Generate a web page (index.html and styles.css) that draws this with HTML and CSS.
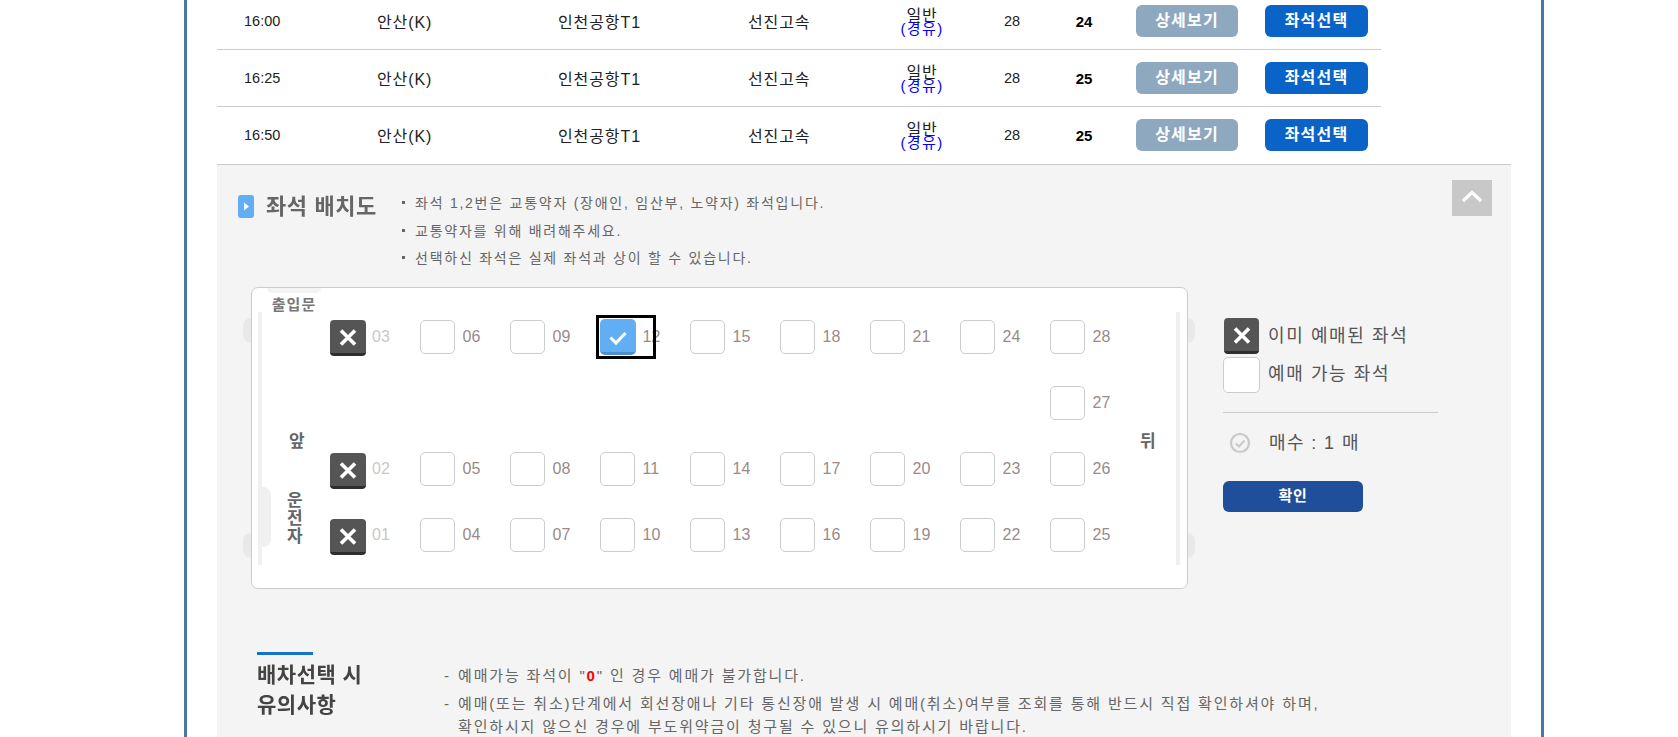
FILE: index.html
```html
<!DOCTYPE html>
<html lang="ko">
<head>
<meta charset="utf-8">
<title>좌석 배치도</title>
<link rel="stylesheet" href="styles.css">
</head>
<body>
<div class="frame">
  <div class="rows">
    <div class="row">
      <span class="time">16:00</span><span class="place">안산(K)</span><span class="place">인천공항T1</span><span class="place">선진고속</span>
      <span class="grade"><span class="g1">일반</span><span class="g2">(경유)</span></span>
      <span class="num">28</span><span class="num strong">24</span>
      <a class="btn btn-gray">상세보기</a><a class="btn btn-blue">좌석선택</a>
    </div>
    <div class="row">
      <span class="time">16:25</span><span class="place">안산(K)</span><span class="place">인천공항T1</span><span class="place">선진고속</span>
      <span class="grade"><span class="g1">일반</span><span class="g2">(경유)</span></span>
      <span class="num">28</span><span class="num strong">25</span>
      <a class="btn btn-gray">상세보기</a><a class="btn btn-blue">좌석선택</a>
    </div>
    <div class="row row-last">
      <span class="time">16:50</span><span class="place">안산(K)</span><span class="place">인천공항T1</span><span class="place">선진고속</span>
      <span class="grade"><span class="g1">일반</span><span class="g2">(경유)</span></span>
      <span class="num">28</span><span class="num strong">25</span>
      <a class="btn btn-gray">상세보기</a><a class="btn btn-blue">좌석선택</a>
    </div>
  </div>

  <section class="panel">
    <a class="up" aria-label="닫기"><svg viewBox="0 0 40 36" width="40" height="36"><path d="M11 21 L20 12.5 L29 21" fill="none" stroke="#fff" stroke-width="3.2"/></svg></a>
    <div class="head">
      <span class="title-icon"><svg viewBox="0 0 16 23" width="16" height="23"><rect width="16" height="23" rx="3" fill="#62aef5"/><path d="M6 7.5 L11 11.5 L6 15.5Z" fill="#fff"/></svg></span>
      <h2 class="title">좌석 배치도</h2>
      <ul class="info">
        <li>좌석 1,2번은 교통약자 (장애인, 임산부, 노약자) 좌석입니다.</li>
        <li>교통약자를 위해 배려해주세요.</li>
        <li>선택하신 좌석은 실제 좌석과 상이 할 수 있습니다.</li>
      </ul>
    </div>

    <div class="seat-area">
      <div class="bus">
        <span class="door">출입문</span>
        <span class="front">앞</span>
        <span class="driver">운<br>전<br>자</span>
        <span class="back">뒤</span>
        <div class="seats">
          <div class="cell off"><span class="seat taken"><svg viewBox="0 0 36 36" width="36" height="36"><path d="M11 10.5 L25 24.5 M25 10.5 L11 24.5" stroke="#fff" stroke-width="3.6" fill="none"/></svg></span><span class="no">03</span></div>
          <div class="cell"><span class="seat"></span><span class="no">06</span></div>
          <div class="cell"><span class="seat"></span><span class="no">09</span></div>
          <div class="cell sel"><span class="seat picked"><svg viewBox="0 0 36 36" width="36" height="36"><path d="M10.5 18.5 L16 24 L25.500 14" stroke="#fff" stroke-width="3" fill="none"/></svg></span><span class="no">12</span></div>
          <div class="cell"><span class="seat"></span><span class="no">15</span></div>
          <div class="cell"><span class="seat"></span><span class="no">18</span></div>
          <div class="cell"><span class="seat"></span><span class="no">21</span></div>
          <div class="cell"><span class="seat"></span><span class="no">24</span></div>
          <div class="cell"><span class="seat"></span><span class="no">28</span></div>

          <div class="cell last-col"><span class="seat"></span><span class="no">27</span></div>

          <div class="cell off low"><span class="seat taken"><svg viewBox="0 0 36 36" width="36" height="36"><path d="M11 10.5 L25 24.5 M25 10.5 L11 24.5" stroke="#fff" stroke-width="3.6" fill="none"/></svg></span><span class="no">02</span></div>
          <div class="cell"><span class="seat"></span><span class="no">05</span></div>
          <div class="cell"><span class="seat"></span><span class="no">08</span></div>
          <div class="cell"><span class="seat"></span><span class="no">11</span></div>
          <div class="cell"><span class="seat"></span><span class="no">14</span></div>
          <div class="cell"><span class="seat"></span><span class="no">17</span></div>
          <div class="cell"><span class="seat"></span><span class="no">20</span></div>
          <div class="cell"><span class="seat"></span><span class="no">23</span></div>
          <div class="cell"><span class="seat"></span><span class="no">26</span></div>

          <div class="cell off low"><span class="seat taken"><svg viewBox="0 0 36 36" width="36" height="36"><path d="M11 10.5 L25 24.5 M25 10.5 L11 24.5" stroke="#fff" stroke-width="3.6" fill="none"/></svg></span><span class="no">01</span></div>
          <div class="cell"><span class="seat"></span><span class="no">04</span></div>
          <div class="cell"><span class="seat"></span><span class="no">07</span></div>
          <div class="cell"><span class="seat"></span><span class="no">10</span></div>
          <div class="cell"><span class="seat"></span><span class="no">13</span></div>
          <div class="cell"><span class="seat"></span><span class="no">16</span></div>
          <div class="cell"><span class="seat"></span><span class="no">19</span></div>
          <div class="cell"><span class="seat"></span><span class="no">22</span></div>
          <div class="cell"><span class="seat"></span><span class="no">25</span></div>
        </div>
      </div>

      <aside class="legend">
        <div class="legend-row first"><span class="seat taken"><svg viewBox="0 0 36 36" width="36" height="36"><path d="M11 10.5 L25 24.5 M25 10.5 L11 24.5" stroke="#fff" stroke-width="3.6" fill="none"/></svg></span><span class="legend-text">이미 예매된 좌석</span></div>
        <div class="legend-row second"><span class="seat big"></span><span class="legend-text">예매 가능 좌석</span></div>
        <div class="count"><svg viewBox="0 0 22 22" width="22" height="22"><circle cx="11" cy="11" r="9" fill="none" stroke="#c9c9c9" stroke-width="2.2"/><path d="M6.800 11.500 L10 14.500 L15.500 8.500" fill="none" stroke="#c9c9c9" stroke-width="2"/></svg><span class="count-text">매수 : 1 매</span></div>
        <a class="confirm">확인</a>
      </aside>
    </div>

    <div class="notes">
      <h3 class="notes-title"><span class="rule"></span>배차선택 시<br>유의사항</h3>
      <ul class="notes-list">
        <li><span class="dash">-</span><span>예매가능 좌석이 "<b class="zero">0</b>" 인 경우 예매가 불가합니다.</span></li>
        <li><span class="dash">-</span><span>예매(또는 취소)단계에서 회선장애나 기타 통신장애 발생 시 예매(취소)여부를 조회를 통해 반드시 직접 확인하셔야 하며,<br>확인하시지 않으신 경우에 부도위약금이 청구될 수 있으니 유의하시기 바랍니다.</span></li>
      </ul>
    </div>
  </section>
</div>
</body>
</html>
```

FILE: styles.css
```css
*, *::before, *::after { box-sizing: border-box; }
html, body { margin: 0; padding: 0; height: 737px; overflow: hidden; background: #fff; }
body { font-family: "Liberation Sans", "Noto Sans CJK KR", sans-serif; color: #222; }
ul { list-style: none; margin: 0; padding: 0; }
h2, h3 { margin: 0; }

.frame {
  width: 1360px; height: 737px; margin-left: 184px;
  border-left: 3px solid #4a76a0; border-right: 3px solid #4a76a0;
  padding-left: 30px; display: flex; flex-direction: column;
}

/* timetable rows */
.rows { width: 1164px; margin-top: -7px; flex: none; }
.row {
  display: grid; height: 57px; align-items: center;
  grid-template-columns: 133px 181px 190px 134px 80px 100px 44px 159px 103px;
  padding-left: 27px;
  border-bottom: 1px solid #ccc;
  font-size: 16px; letter-spacing: .9px;
}
.row-last { border-bottom-color: transparent; }
.time { font-size: 14.5px; letter-spacing: 0; }
.grade { display: flex; flex-direction: column; align-items: center; }
.g1 { line-height: 16px; margin: 3px 0 -3px; }
.g2 { color: #00f; font-size: 15px; line-height: 16px; letter-spacing: 1.4px; }
.num { text-align: center; font-size: 14.5px; letter-spacing: 0; }
.strong { font-weight: 700; color: #000; font-size: 15px; }
.btn {
  display: flex; align-items: center; justify-content: center; height: 32px;
  border-radius: 6px; color: #fff;
  font-size: 16px; font-weight: 700; letter-spacing: 1.2px; padding-bottom: 4px;
}
.btn-gray { background: #8ea8c0; width: 102px; margin-left: 30px; }
.btn-blue { background: #0a64c8; width: 103px; }

/* seat panel */
.panel {
  position: relative; flex: 1; width: 1294px; min-height: 0;
  background: #f4f4f4; border-top: 1px solid #ccc; padding-top: 24px;
}
.up {
  position: absolute; top: 15px; right: 19px; width: 40px; height: 36px;
  background: #c8c8c8; display: block;
}
.up svg { display: block; }
.head { display: flex; align-items: flex-start; padding-left: 21px; height: 83px; }
.title-icon { width: 16px; height: 23px; margin-top: 6px; }
.title-icon svg { display: block; }
.title {
  margin: 2px 0 0 12px; width: 136px; font-size: 22px; line-height: 32px; font-weight: 700;
  color: #666; letter-spacing: .6px; filter: blur(.4px);
}
.info { padding-top: 1px; }
.info li {
  position: relative; padding-left: 13px; font-size: 14px; line-height: 27.5px;
  color: #666; letter-spacing: 1.75px;
}
.info li::before {
  content: ""; position: absolute; left: 0; top: 11px; width: 3px; height: 3px; background: #666;
}

.seat-area {
  position: relative; z-index: 0; display: flex; align-items: flex-start;
  margin-top: 15px; padding-left: 34px;
}
.seat-area::before, .seat-area::after {
  content: ""; position: absolute; z-index: -1; width: 16px; height: 25px; left: 26px;
  background: #e9e9e9; border-radius: 8px; box-shadow: 936px 0 0 #e9e9e9;
}
.seat-area::before { top: 31px; }
.seat-area::after { top: 246px; }
.bus {
  position: relative; width: 937px; height: 302px; flex: none;
  background: #fff; border: 1px solid #ccc; border-radius: 7px;
  padding: 32px 0 0 78px;
}
.bus::before {
  content: ""; position: absolute; left: 6px; top: 24px; width: 4px; height: 253px; background: #f0f0f0;
  box-shadow: 918px 0 0 #f0f0f0;
}
.door {
  position: absolute; left: 15px; top: 0; width: 54px; padding-top: 7px; text-align: center;
  font-size: 15px; line-height: 20px; font-weight: 700; color: #777; background: #fff; letter-spacing: 1px;
}
.door::before {
  content: ""; position: absolute; left: 0; top: 0; width: 54px; height: 5px; background: #f3f3f3;
  border-radius: 0 0 6px 6px;
}
.front, .back, .driver {
  position: absolute; font-size: 17px; font-weight: 700; color: #666; line-height: 17px;
}
.front { left: 37px; top: 145px; }
.back { left: 888px; top: 145px; }
.driver { left: 10px; top: 199px; height: 60px; padding: 5px 0 0 25px; line-height: 18px; }
.driver::before {
  content: ""; position: absolute; left: 0; top: 0; width: 9px; height: 60px; background: #f0f0f0;
  border-radius: 0 8px 8px 0;
}

.seats { display: grid; grid-template-columns: repeat(9, 90px); grid-auto-rows: 66px; }
.cell { position: relative; display: flex; align-items: flex-start; }
.last-col { grid-column: 9; }
.seat {
  display: block; width: 35px; height: 34px; flex: none; background: #fff;
  border: 1px solid #ccc; border-radius: 5px;
}
.seat svg { display: block; }
.seat.taken {
  width: 36px; height: 36px; border: 0; border-bottom: 3px solid #2e2e2e; background: #555; border-radius: 4px;
}
.low .seat.taken { margin-top: 1px; }
.seat.picked {
  width: 36px; height: 36px; margin-top: -1px; border: 0; border-bottom: 3px solid #4c90d2; background: #62aef5; border-radius: 5px;
}
.no { margin-left: 7.5px; font-size: 16px; line-height: 34px; color: #9a8a8a; }
.off .no { margin-left: 6px; color: #c8c8c8; }
.sel .no { margin-left: 6.5px; }
.sel::after {
  content: ""; position: absolute; left: -4px; top: -5px; width: 60px; height: 44px; border: 3px solid #000;
}

.legend { width: 215px; margin-left: 35px; padding-top: 31px; color: #555; font-size: 18px; letter-spacing: 1.6px; flex: none; }
.legend-row { display: flex; align-items: center; gap: 9px; height: 36px; }
.first .legend-text { padding-bottom: 4px; }
.second .legend-text { padding-bottom: 6px; }
.legend-row .seat.taken { margin-left: 1px; width: 35px; height: 36px; }
.legend-row.second { margin-top: 3px; gap: 8px; }
.seat.big { width: 37px; height: 36px; }
.count {
  display: flex; align-items: center; margin-top: 19px; padding-left: 6px; border-top: 1px solid #ccc; height: 60px; gap: 18px;
}
.count svg { flex: none; }
.count-text { padding-bottom: 4px; letter-spacing: 1.4px; }
.confirm {
  display: flex; align-items: center; justify-content: center; width: 140px; height: 31px; margin-top: 9px;
  background: #1f4f9a; color: #fff; border-radius: 6px; font-size: 15px; font-weight: 700; letter-spacing: .6px; padding-bottom: 4px;
}

.notes { display: flex; align-items: flex-start; margin-top: 63px; padding-left: 40px; }
.notes-title { width: 187px; flex: none; font-size: 21px; line-height: 30px; font-weight: 700; color: #444; letter-spacing: .5px; filter: blur(.3px); }
.rule { display: block; width: 56px; height: 3px; background: #1673cc; margin-bottom: 5px; }
.notes-list { padding-top: 12px; color: #666; font-size: 15px; letter-spacing: 1.83px; line-height: 23px; }
.notes-list li { display: flex; gap: 8px; margin-bottom: 5px; }
.dash { width: 6px; flex: none; }
.zero { color: #f00; font-weight: 700; }
```
